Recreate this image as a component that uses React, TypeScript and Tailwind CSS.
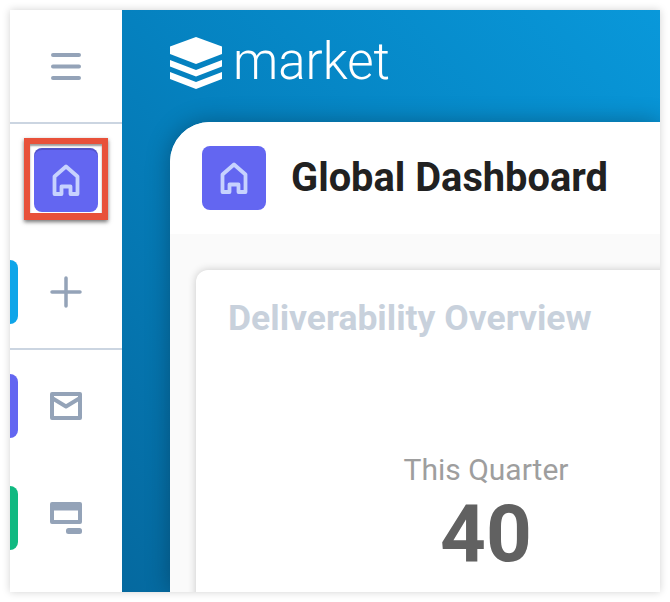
import React from 'react';

const HomeIcon = () => (
  <svg viewBox="0 0 64 64" className="w-16 h-16" fill="none" stroke="#c7d2fe" strokeWidth="3.8" strokeLinejoin="round" strokeLinecap="round">
    <path d="M20.5 46V28.5L32 18.5L43.5 28.5V46H36.5V38.5H27.5V46H20.5Z" />
  </svg>
);

const Tab = ({ color }: { color: string }) => (
  <div className={`w-2 h-16 rounded-r-lg ${color}`} />
);

const Sidebar = () => (
  <div className="w-[112px] shrink-0 bg-white flex flex-col">
    <div className="h-[114px] shrink-0 border-b-2 border-[#cbd5e1] flex items-center justify-center">
      <svg viewBox="0 0 32 32" className="w-8 h-8 -mt-0.5" fill="none" stroke="#94a3b8" strokeWidth="4" strokeLinecap="round">
        <path d="M3 6H29M3 17.5H29M3 29H29" />
      </svg>
    </div>
    <div className="relative pt-6 pb-6 border-b-2 border-[#cbd5e1] flex flex-col gap-12">
      <div className="flex justify-center">
        <div className="w-16 h-16 rounded-lg bg-[#6366f1] shadow-[inset_0_2px_0_rgba(49,46,129,0.35)]">
          <HomeIcon />
        </div>
      </div>
      <div className="flex items-center h-16">
        <Tab color="bg-[#0ea5e9]" />
        <div className="ml-8">
          <svg viewBox="0 0 32 32" className="w-8 h-8" fill="none" stroke="#94a3b8" strokeWidth="3.5" strokeLinecap="round">
            <path d="M16 2V30M2 16H30" />
          </svg>
        </div>
      </div>
      {/* highlight box */}
      <div className="absolute left-[14px] top-[14px] w-[84px] h-[82px] border-[6px] border-b-[7px] border-[#e8513a] shadow-[0_2px_4px_rgba(0,0,0,0.55),inset_0_2px_2px_rgba(0,0,0,0.4)]" />
    </div>
    <div className="pt-6 flex flex-col gap-12">
      <div className="flex items-center h-16">
        <Tab color="bg-[#6366f1]" />
        <div className="ml-8">
          <svg viewBox="0 0 32 28" className="w-8 h-7" fill="none" stroke="#94a3b8" strokeWidth="4" strokeLinejoin="round">
            <rect x="2" y="2" width="28" height="24" />
            <path d="M2 6L16 14.5L30 6" />
          </svg>
        </div>
      </div>
      <div className="flex items-center h-16">
        <Tab color="bg-[#10b981]" />
        <div className="ml-8">
          <svg viewBox="0 0 32 32" className="w-8 h-8" fill="none">
            <rect x="2" y="2" width="28" height="18" stroke="#94a3b8" strokeWidth="4" strokeLinejoin="round" />
            <path d="M2 6H30" stroke="#94a3b8" strokeWidth="5" />
            <rect x="16" y="26" width="16" height="6" rx="2.5" fill="#94a3b8" />
          </svg>
        </div>
      </div>
    </div>
  </div>
);

const Logo = () => (
  <svg viewBox="0 0 52 52" className="w-[52px] h-[52px]" fill="#ffffff">
    <path d="M26 0L52 9.5V17L26 27L0 17V9.5Z" />
    <path d="M0 23L26 33L52 23V29.5L26 39.5L0 29.5Z" />
    <path d="M0 35L26 45L52 35V42L26 52L0 42Z" />
  </svg>
);

export default function App() {
  return (
    <div className="w-[670px] h-[602px] p-2.5 bg-white overflow-hidden" style={{ fontFamily: 'Roboto, sans-serif' }}>
      <div className="w-[650px] h-[582px] flex overflow-hidden shadow-[0_0_8px_rgba(0,0,0,0.18)]">
        <Sidebar />
        <main className="flex-1 min-w-0 flex flex-col overflow-hidden bg-gradient-to-bl from-[#0998da] via-[#0581bf] to-[#05699f]">
          <header className="h-[112px] shrink-0 pl-12 flex items-center gap-[12px]">
            <div className="-mt-[6px]">
              <Logo />
            </div>
            <span className="text-[51px] leading-none font-light text-white -mt-[10px] -ml-[1px]">market</span>
          </header>
          <section className="flex-1 min-h-0 ml-12 rounded-tl-[40px] overflow-hidden bg-[#fafafa] flex flex-col shadow-[0_0_24px_rgba(0,0,0,0.3)]">
            <div className="h-[112px] shrink-0 bg-white px-8 flex items-center gap-[25px]">
              <div className="w-16 h-16 rounded-lg bg-[#6366f1]">
                <HomeIcon />
              </div>
              <h1 className="text-[39.8px] leading-none font-bold text-[#212121] whitespace-nowrap">Global Dashboard</h1>
            </div>
            <div className="pl-[26px] pt-9">
              <div className="w-[580px] h-[340px] bg-white rounded-tl-xl shadow-[0_0_8px_rgba(0,0,0,0.2)] flex flex-col">
                <h2 className="pl-[32px] pt-[29px] text-[35.5px] leading-[38px] font-bold text-[#c8d1dc] whitespace-nowrap">Deliverability Overview</h2>
                <div className="mt-[117px] flex flex-col items-center gap-2">
                  <span className="text-[30px] leading-8 text-[#9e9e9e]">This Quarter</span>
                  <span className="text-[80px] leading-[80px] font-bold text-[#616161]">40</span>
                </div>
              </div>
            </div>
          </section>
        </main>
      </div>
    </div>
  );
}
